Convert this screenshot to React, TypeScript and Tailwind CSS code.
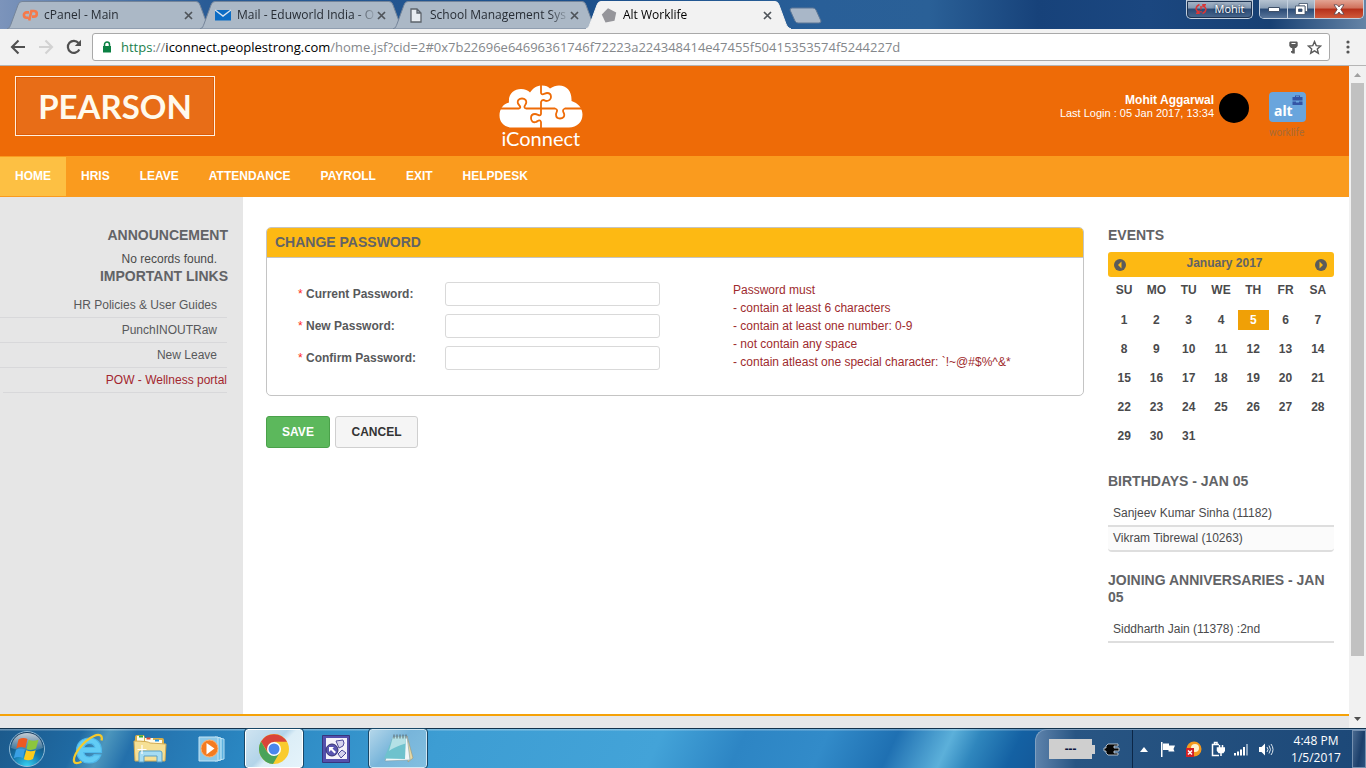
import React from "react";

const ARIAL = "font-['Liberation_Sans',Arial,sans-serif]";
const SEGOE = "font-['Open_Sans','Noto_Sans',sans-serif]";

function CloseMark() {
  return (
    <svg className="block size-[9px]" viewBox="0 0 9 9" aria-hidden="true">
      <path d="M1 1l7 7M8 1l-7 7" stroke="#4f545a" strokeWidth="1.7" />
    </svg>
  );
}

function Tab({ title, icon, active }: { title: string; icon: React.ReactNode; active?: boolean }) {
  return (
    <div className={active ? "relative z-10 -mr-[12px] h-[28px] w-[205px] min-w-0" : "relative -mr-[12px] h-[28px] w-[205px] min-w-0"}>
      <svg className="absolute inset-0 size-full" viewBox="0 0 205 28" preserveAspectRatio="none" aria-hidden="true">
        <path
          d="M0 28C3 27 3 25 4 23L11 4Q12 .5 15 .5H189Q192 .5 193 4L200 23C201 25 202 27 205 28Z"
          fill={active ? "#f2f2f2" : "#abb8c6"}
          stroke={active ? "#f2f2f2" : "#75859a"}
        />
      </svg>
      <div className="relative flex h-full items-center pr-[19px] pl-[15px]">
        <span className="flex w-4 shrink-0 justify-center">{icon}</span>
        <span
          className={
            (active ? "text-black" : "text-[#272d35]") +
            " ml-[6px] min-w-0 flex-1 overflow-hidden text-[12px] leading-4 whitespace-nowrap [mask-image:linear-gradient(to_right,black_85%,transparent)]"
          }
        >
          {title}
        </span>
        <button aria-label={"Close " + title} className="shrink-0">
          <CloseMark />
        </button>
      </div>
    </div>
  );
}

function TabStrip() {
  return (
    <div className="flex h-[29px] shrink-0 items-start justify-between bg-[linear-gradient(90deg,#7c94bb_0%,#2a5c96_15%,#1b4f8b_42%,#295f98_60%,#2a6097_68%,#17427a_76%,#1b4780_84%,#174073_93%,#6584a6_100%)]">
      <div className="flex min-w-0 items-end pt-px pl-[7px]">
        <Tab
          title="cPanel - Main"
          icon={
            <svg className="h-[12px] w-[16px]" viewBox="0 0 16 12" fill="none" stroke="#f6794a" strokeWidth="2.6" aria-hidden="true">
              <path d="M7 3.4H4.6a2.7 2.7 0 0 0 0 5.4H6.4M7.2 11.5L9.4 2H12a2.5 2.5 0 0 1 0 5.6H10" />
            </svg>
          }
        />
        <Tab
          title="Mail - Eduworld India - O"
          icon={
            <svg className="h-[12px] w-[16px]" viewBox="0 0 16 12" aria-hidden="true">
              <path d="M0 1h16v10.500H0z" fill="#0b6cc4" />
              <path d="M0 1l8 6 8-6" fill="none" stroke="#d7e3ef" strokeWidth="1.4" />
            </svg>
          }
        />
        <Tab
          title="School Management Sys"
          icon={
            <svg className="h-[15px] w-[12px]" viewBox="0 0 12 15" fill="#e8edf2" stroke="#5c636b" strokeWidth="1.3" aria-hidden="true">
              <path d="M1 1h6l4 4v9H1zM7 1v4h4" />
            </svg>
          }
        />
        <Tab
          active
          title="Alt Worklife"
          icon={
            <svg className="h-[15px] w-[16px]" viewBox="0 0 16 15" aria-hidden="true">
              <path d="M7 .3L15.200 4.500 13.500 12.800 4.500 14.500.8 6.500z" fill="#95959a" />
            </svg>
          }
        />
        <button aria-label="New tab" className="relative z-10 ml-[10px] self-center">
          <svg className="block h-[17px] w-[34px]" viewBox="0 0 34 17" aria-hidden="true">
            <path d="M3 1h21q2 0 3 2l5 11q0 2-2 2H9q-2 0-3-2L1 3q0-2 2-2z" fill="#a9b7c8" stroke="#5d7797" />
          </svg>
        </button>
      </div>
      <div className="flex shrink-0 gap-[6px] pr-[2px]">
        <button className="flex h-[19px] w-[67px] items-center justify-center gap-2 rounded-b-[5px] border border-t-0 border-[#c3d0df] bg-[linear-gradient(#aebccc_0%,#8499b2_45%,#2a4a75_50%,#4a688e_100%)] text-[11px] leading-4 text-white outline-1 -outline-offset-2 outline-[#1d3352] [text-shadow:0_0_3px_#0a1a30]">
          <svg className="size-[12px]" viewBox="0 0 12 12" fill="none" stroke="#d93636" strokeWidth="1.500" aria-hidden="true">
            <path d="M4.500 1.500Q.8 3 1.200 6.500L3.500 10M1 10.300h3V7.500M7.500 10.500Q11.200 9 10.800 5.500L8.500 2M11 1.700H8v2.800M6 3v3.500M6 8v1.500" />
          </svg>
          Mohit
        </button>
        <div className="flex h-[19px] overflow-hidden rounded-b-[5px] border border-t-0 border-[#c3d0df]">
          <button aria-label="Minimize" className="flex w-[28px] items-center justify-center border-r border-[#c3d0df] bg-[linear-gradient(#b6c3d1_0%,#8ca0b6_45%,#2a4a75_50%,#58759a_100%)]">
            <svg className="h-[5px] w-[12px]" viewBox="0 0 12 5" aria-hidden="true">
              <path d="M.5.500h11v4H.5z" fill="#fff" stroke="#3f5068" />
            </svg>
          </button>
          <button aria-label="Restore" className="flex w-[27px] items-center justify-center border-r border-[#c3d0df] bg-[linear-gradient(#b6c3d1_0%,#8ca0b6_45%,#2a4a75_50%,#58759a_100%)]">
            <svg className="h-[12px] w-[13px]" viewBox="0 0 13 12" fillRule="evenodd" fill="#fff" stroke="#3f5068" strokeWidth=".8" aria-hidden="true">
              <path d="M4 .5h8.500v8H10V3H4z" />
              <path d="M.5 3H10v8.500H.5zM3.500 6h3.500v2.500H3.500z" />
            </svg>
          </button>
          <button aria-label="Close window" className="flex w-[48px] items-center justify-center bg-[linear-gradient(#e3a493_0%,#d0705b_45%,#b5301a_50%,#d0593a_100%)]">
            <svg className="h-[11px] w-[12px]" viewBox="0 0 12 11" aria-hidden="true">
              <path d="M1 .8h3.200L6 3l1.800-2.200H11L7.800 5.500 11 10.200H7.800L6 8l-1.800 2.200H1l3.200-4.700z" fill="#fff" stroke="#57444d" strokeWidth=".8" />
            </svg>
          </button>
        </div>
      </div>
    </div>
  );
}

function Toolbar() {
  return (
    <div className="flex h-[37px] shrink-0 items-center border-b border-[#b5b5b5] bg-[#f2f2f2] pr-[16px] pl-[10px]">
      <div className="flex items-center gap-[12px]">
        <button aria-label="Back">
          <svg className="block size-4" viewBox="0 0 16 16" fill="none" stroke="#505050" strokeWidth="2.100" aria-hidden="true">
            <path d="M15 8H2M8.500 1.500L2 8l6.500 6.500" />
          </svg>
        </button>
        <button aria-label="Forward">
          <svg className="block size-4" viewBox="0 0 16 16" fill="none" stroke="#d2d2d2" strokeWidth="2.100" aria-hidden="true">
            <path d="M1 8h13M7.500 1.500L14 8l-6.500 6.500" />
          </svg>
        </button>
        <button aria-label="Reload">
          <svg className="block size-4" viewBox="0 0 16 16" aria-hidden="true">
            <path d="M13.300 10.500A6 6 0 1 1 12.500 4" fill="none" stroke="#505050" strokeWidth="2.200" />
            <path d="M15 .8v6.200H8.800z" fill="#505050" />
          </svg>
        </button>
      </div>
      <div className="ml-[10px] flex h-[28px] min-w-0 flex-1 items-center rounded-[3px] border border-[#a9a9a9] bg-white pr-[7px] pl-[9px]">
        <svg className="mr-[9px] h-[12px] w-[10px] shrink-0" viewBox="0 0 10 12" aria-hidden="true">
          <path d="M2.500 6V3.500a2.500 2.500 0 0 1 5 0V6" fill="none" stroke="#0b8043" strokeWidth="1.500" />
          <path d="M1 5h8v6.500H1z" fill="#0b8043" />
        </svg>
        <span className="min-w-0 flex-1 overflow-hidden text-[13px] leading-5 whitespace-nowrap text-[#84878b]">
          <span className="text-[#1b7f4d]">https</span>://<span className="text-black">iconnect.peoplestrong.com</span>
          /home.jsf?cid=2#0x7b22696e64696361746f72223a224348414e47455f50415353574f5244227d
        </span>
        <button aria-label="Saved passwords">
          <svg className="block h-[13px] w-[9px]" viewBox="0 0 9 13" fillRule="evenodd" fill="#5a5a5a" aria-hidden="true">
            <path d="M1 .5h7l.7 1V5L7 7H5.800v5.500H3.200V7H2L.3 5V1.500zM2.500 2v1h4V2z" />
            <path d="M2 10h2v1.800H2z" />
          </svg>
        </button>
        <button aria-label="Bookmark this page" className="ml-[9px]">
          <svg className="block size-[15px]" viewBox="0 0 15 15" fill="none" stroke="#5a5a5a" strokeWidth="1.400" aria-hidden="true">
            <path d="M7.500 1.600l1.700 4 4.400.4-3.300 2.900 1 4.300-3.800-2.300-3.800 2.300 1-4.300L1.400 6l4.400-.4z" />
          </svg>
        </button>
      </div>
      <button aria-label="Menu" className="ml-[16px]">
        <svg className="block h-[14px] w-[4px]" viewBox="0 0 4 14" fill="#555" aria-hidden="true">
          <circle cx="2" cy="2" r="1.600" />
          <circle cx="2" cy="7" r="1.600" />
          <circle cx="2" cy="12" r="1.600" />
        </svg>
      </button>
    </div>
  );
}

function Banner() {
  return (
    <header className="grid h-[90px] shrink-0 grid-cols-[35%_auto_1fr] items-start bg-[#ee6b07] pr-[43px] pl-[15px]">
      <div className="mt-[10px] flex h-[60px] w-[200px] items-center justify-center border border-[#fff0de] bg-[#e86d17] font-['Lato',sans-serif] text-[33px] leading-none font-bold text-[#fffaec] ring-1 ring-[#dd5c08] ring-inset">
        PEARSON
      </div>
      <div className="mt-[19px] flex w-[140px] flex-col items-center pl-[8px]">
        <svg className="h-[43px] w-[84px]" viewBox="0 0 84 43" aria-hidden="true">
          <path d="M13 42.500C5 42.500.5 37 .5 30.500.500 24 4 19 10 17.500 9 9 15 4 22 4c4 0 7 1.500 9 3.500C34 3 38 .5 43 .5c4 0 6 1 8 3C54 1.500 57 .5 60 .5c8 0 13 6 12.500 15.500C79 18 83.500 23 83.500 29.500 83.500 37 78 42.500 70 42.500z" fill="#fff" />
          <path
            d="M0 23.500H20c3-1 0-3-1-5-1-3 1-5 4-5s5 2 4 5c-1 2-3 4 0 5H56c4 1 1 4 1 6 0 3 2 4 4 4 3 0 5-2 4-5-1-2-2-4 1-5H84M42 0V8c1 3 4 0 6 0 3 0 4 2 4 4s-2 4-5 4c-2-1-4-2-5 1V29c-1 3-3 0-6 0-3 0-4 2-4 4 0 3 2 5 5 4 2-1 4-3 5 0v6"
            fill="none"
            stroke="#ee6b07"
            strokeWidth="1.800"
          />
        </svg>
        <div className="font-['Lato',sans-serif] text-[20px] leading-5 text-white">iConnect</div>
      </div>
      <div className="flex items-start justify-end">
        <div className="mt-[27px] text-right text-white">
          <div className="text-[12px] leading-[14px] font-bold">Mohit Aggarwal</div>
          <div className="text-[11px] leading-3">Last Login : 05 Jan 2017, 13:34</div>
        </div>
        <div className="mt-[27px] ml-[5px] size-[30px] rounded-full bg-black" />
        <svg className="mt-[26px] ml-[20px] h-[47px] w-[37px]" viewBox="0 0 37 47" aria-label="alt worklife" role="img">
          <rect width="37" height="30" rx="4" fill="#69a5dd" />
          <path d="M23.500 5h2.500V3.500h5V5h2.500v3.500h-10zM27 5h3v-.7h-3zM23.500 9.500h3.500v1h3v-1h3.500V13h-10z" fill="#3455a6" />
          <text x="5" y="24" fontFamily="Noto Sans, sans-serif" fontSize="14" fontWeight="700" fill="#fff">alt</text>
          <text x="0" y="44" fontFamily="Roboto, sans-serif" fontSize="10" fill="#a96a35">worklife</text>
        </svg>
      </div>
    </header>
  );
}

const NAV = ["HOME", "HRIS", "LEAVE", "ATTENDANCE", "PAYROLL", "EXIT", "HELPDESK"];

function Nav() {
  return (
    <nav className="flex h-[41px] shrink-0 bg-[#fa9b1e] py-px text-[12px] font-bold text-white">
      {NAV.map((item, i) => (
        <a key={item} href="#" className={i === 0 ? "flex items-center bg-[#fdc043] px-[15px] pb-[2px]" : "flex items-center px-[15px] pb-[2px]"}>
          {item}
        </a>
      ))}
    </nav>
  );
}

const HEADING = "text-[14px] leading-[17px] font-bold text-[#626366]";

function Sidebar() {
  return (
    <aside className="w-[243px] shrink-0 bg-[#e6e6e6] pt-[30px] pr-[15px] text-right text-[12px] text-[#58595b]">
      <h2 className={HEADING}>ANNOUNCEMENT</h2>
      <p className="pt-[7px] pr-[11px] leading-[17px] text-[#4a4a4a]">No records found.</p>
      <h2 className={HEADING}>IMPORTANT LINKS</h2>
      <ul className="mt-[8px] mr-px">
        {["HR Policies & User Guides", "PunchINOUTRaw", "New Leave"].map((t) => (
          <li key={t} className="h-[25px] border-b border-[#d8d8da] pr-[10px] leading-6">
            <a href="#">{t}</a>
          </li>
        ))}
        <li className="ml-[3px] h-[25px] border-b border-[#d8d8da] leading-6 text-[#a3262f]">
          <a href="#">POW - Wellness portal</a>
        </li>
      </ul>
    </aside>
  );
}

function PasswordPanel() {
  const fields = [
    ["current", "Current Password:"],
    ["new", "New Password:"],
    ["confirm", "Confirm Password:"],
  ];
  return (
    <main className="min-w-0 flex-1 pt-[30px] pr-[24px] pl-[23px]">
      <form>
        <section className="overflow-hidden rounded-[5px] border border-[#c4c4c4] bg-white">
          <h2 className="h-[30px] border-b border-[#c4c4c4] bg-[#fdb913] px-2 text-[14px] leading-[29px] font-bold text-[#626366]">CHANGE PASSWORD</h2>
          <div className="flex pt-[24px] pb-[24px] pl-[31px]">
            <div className="flex shrink-0 flex-col gap-2">
              {fields.map(([id, label]) => (
                <div key={id} className="flex items-center">
                  <label htmlFor={id} className="w-[147px] text-[12px] font-bold text-[#58595b]">
                    <span className="font-normal text-[#ff2a1a]">*</span> {label}
                  </label>
                  <input id={id} type="password" className="h-[24px] w-[215px] rounded-[3px] border border-[#d9d9d9] bg-white px-2 text-[12px] outline-none" />
                </div>
              ))}
            </div>
            <p className="-mt-px ml-[73px] text-[12px] leading-[18px] text-[#9e2b2e]">
              Password must
              <br />- contain at least 6 characters
              <br />- contain at least one number: 0-9
              <br />- not contain any space
              <br />- contain atleast one special character: `!~@#$%^&amp;*
            </p>
          </div>
        </section>
        <div className="mt-[20px] flex gap-[5px] text-[12px]">
          <button type="button" className="h-[32px] w-[64px] rounded-[3px] border border-[#4aa14a] bg-[#5cb85c] font-bold text-white">SAVE</button>
          <button type="button" className="h-[32px] w-[83px] rounded-[3px] border border-[#cfcfcf] bg-[#f5f5f5] font-bold text-[#333]">CANCEL</button>
        </div>
      </form>
    </main>
  );
}

const WEEKS = [0, 1, 2, 3, 4].map((w) => [1, 2, 3, 4, 5, 6, 7].map((d) => w * 7 + d));

function Arrow({ flip }: { flip?: boolean }) {
  return (
    <svg className="block size-3" viewBox="0 0 12 12" aria-hidden="true">
      <circle cx="6" cy="6" r="6" fill="#5b5b5b" />
      <path d={flip ? "M4.500 2.500l3.500 3.500-3.500 3.500z" : "M7.500 2.500L4 6l3.500 3.500z"} fill="#fdb913" />
    </svg>
  );
}

function PeopleRow({ children, alt }: { children: React.ReactNode; alt?: boolean }) {
  return (
    <li className={alt ? "h-[25px] rounded-b-[4px] border-b-2 border-[#dedede] bg-[#fbfbfb] pl-[5px] leading-[23px]" : "h-[25px] border-b-2 border-[#dedede] pl-[5px] leading-[23px]"}>
      {children}
    </li>
  );
}

function RightColumn() {
  return (
    <aside className="mr-[15px] w-[226px] shrink-0 pt-[30px] text-[12px] text-[#4a4a4c]">
      <h2 className={HEADING}>EVENTS</h2>
      <div className="mt-[8px] flex h-[25px] items-center justify-between rounded-[3px] bg-[#fdb913] pr-[7px] pl-[6px] font-bold text-[#626366]">
        <button aria-label="Previous month">
          <Arrow />
        </button>
        <span className="pb-1 pl-2">January 2017</span>
        <button aria-label="Next month">
          <Arrow flip />
        </button>
      </div>
      <table className="w-full table-fixed border-collapse text-center font-bold">
        <thead>
          <tr className="h-[28px]">
            {["SU", "MO", "TU", "WE", "TH", "FR", "SA"].map((d) => (
              <th key={d} className="p-0 pb-0.5">{d}</th>
            ))}
          </tr>
        </thead>
        <tbody>
          {WEEKS.map((week) => (
            <tr key={week[0]} className="h-[29px]">
              {week.map((d) => (
                <td key={d} className="p-0">
                  {d <= 31 && <span className={d === 5 ? "mx-auto block h-5 w-[31px] bg-[#f0a006] leading-5 text-white" : "mx-auto block h-5 leading-5"}>{d}</span>}
                </td>
              ))}
            </tr>
          ))}
        </tbody>
      </table>
      <h2 className={"mt-[23px] " + HEADING}>BIRTHDAYS - JAN 05</h2>
      <ul className="mt-[12px]">
        <PeopleRow>Sanjeev Kumar Sinha (11182)</PeopleRow>
        <PeopleRow alt>Vikram Tibrewal (10263)</PeopleRow>
      </ul>
      <h2 className={"mt-[20px] " + HEADING}>JOINING ANNIVERSARIES - JAN 05</h2>
      <ul className="mt-[12px]">
        <PeopleRow>Siddharth Jain (11378) :2nd</PeopleRow>
      </ul>
    </aside>
  );
}

function ScrollBar() {
  return (
    <div className="flex w-[17px] shrink-0 flex-col items-center bg-[#f1f1f1]">
      <svg className="h-[17px] w-[17px] shrink-0" viewBox="0 0 17 17" aria-hidden="true">
        <path d="M5 11h7L8.500 7z" fill="#a0a0a0" />
      </svg>
      <div className="w-[13px] grow-[573] basis-0 bg-[#c1c1c1]" />
      <div className="grow-[55] basis-0" />
      <svg className="h-[17px] w-[17px] shrink-0" viewBox="0 0 17 17" aria-hidden="true">
        <path d="M5 6h7l-3.500 4z" fill="#505050" />
      </svg>
    </div>
  );
}

function StartOrb() {
  return (
    <svg className="size-[38px]" viewBox="0 0 38 38" aria-hidden="true">
      <defs>
        <radialGradient id="orb" cx=".5" cy="1" r=".95">
          <stop offset="0" stopColor="#35d4f3" />
          <stop offset=".45" stopColor="#1678ae" />
          <stop offset="1" stopColor="#153b60" />
        </radialGradient>
        <linearGradient id="orbShine" x2="0" y2="1">
          <stop offset="0" stopColor="#fff" stopOpacity=".75" />
          <stop offset="1" stopColor="#fff" stopOpacity=".1" />
        </linearGradient>
      </defs>
      <circle cx="19" cy="19" r="17.500" fill="url(#orb)" stroke="#92bcd8" />
      <path d="M3 18C4 8 11 3 19 3s15 5 16 15c-9 4-22 4-32 0z" fill="url(#orbShine)" />
      <path d="M10.500 9.500q4.500-2.500 9-.5L17.300 18q-4.500-2-9 .5z" fill="#ee5a22" />
      <path d="M20.700 9.800q4.500 2 9.800 0L28 18.500q-5 2.500-9.500.5z" fill="#8cc63e" />
      <path d="M8 19.800q4.500-2.500 9-.3L14.800 28q-4.500-2-9 .3z" fill="#3aa0e4" />
      <path d="M18.200 20.200q4.500 2.200 9.500 0L25 29q-4.500 2.500-9.200.3z" fill="#fecb1c" />
    </svg>
  );
}

function IeIcon() {
  return (
    <svg className="h-[32px] w-[32px]" viewBox="0 0 32 32" aria-hidden="true">
      <path
        d="M29.500 19.500H11.800c.5 3 3 4.500 5.700 4.500 2.200 0 3.800-.8 4.800-2.300l6.500.3C27 27 22.500 30 17 30 10 30 4.500 25 4.500 17.500S10 5 17.500 5s12.500 5.500 12 14.500zM12 14.500h10.800c-.4-2.600-2.600-4.200-5.300-4.200s-4.900 1.600-5.500 4.200z"
        fill="#62ccf5"
        stroke="#4fb9ec"
        strokeWidth="1.200"
      />
      <path d="M29.500 7.500C31 2 27 .5 22 3 11 8 1 22 2 28c.5 3 4 2.500 7.500.8" fill="none" stroke="#f5ca2c" strokeWidth="2.300" />
    </svg>
  );
}

function ExplorerIcon() {
  return (
    <svg className="h-[31px] w-[34px]" viewBox="0 0 34 31" aria-hidden="true">
      <path d="M2 4q0-2 2-2h7l1 3h17q2 0 2 2v20H2z" fill="#d8ae4a" />
      <path d="M4 3h7v5H4zM12 5h8v5h-8zM20 7h9v5h-9z" fill="#fffbe8" />
      <path d="M6 2.500h4v2H6z" fill="#30ad3c" />
      <path d="M13.500 4.500h4v2h-4z" fill="#e34c35" />
      <path d="M22 6.500h4v2h-4z" fill="#2696e4" />
      <path d="M1 8q14 0 16 2l16 1-1 17H2z" fill="#f6e095" stroke="#d3ac54" />
      <path d="M6 29V20q0-2 2-2h19q2 0 2 2v9h-5v-6H11v6z" fill="#a6dcf2" stroke="#5a9fc4" />
      <path d="M9 12v9M4.500 16.500h9" stroke="#fff" strokeWidth="1.200" />
    </svg>
  );
}

function MediaIcon() {
  return (
    <svg className="h-[27px] w-[29px]" viewBox="0 0 29 27" aria-hidden="true">
      <path d="M21 3l5 1v20l-5 1z" fill="#5fb2df" stroke="#b7e0f4" />
      <path d="M17 2l6 1v22l-6 1z" fill="#73c1e8" stroke="#d0edf9" />
      <path d="M1 2h19v24H1z" fill="#8bc8e8" stroke="#c4e4f4" />
      <circle cx="11.500" cy="13.500" r="8.500" fill="#f47b20" stroke="#fbb475" />
      <path d="M8.500 8l8 5.500-8 6z" fill="#fff" />
    </svg>
  );
}

function ChromeIcon() {
  return (
    <svg className="size-[30px]" viewBox="0 0 30 30" aria-hidden="true">
      <circle cx="15" cy="15" r="15" fill="#f9cb2d" />
      <path d="M15 15L8.900 18.500 2 7.500A15 15 0 0 1 28 7.800H15z" fill="#d9453a" />
      <path d="M2 7.500A15 15 0 0 0 14 30l6.500-11.200L15 15 8.500 18.500z" fill="#4aa35a" />
      <circle cx="15" cy="15" r="7" fill="#fff" />
      <circle cx="15" cy="15" r="5.500" fill="#4a87ed" />
    </svg>
  );
}

function ToolIcon() {
  return (
    <svg className="size-[28px]" viewBox="0 0 28 28" aria-hidden="true">
      <path d="M.5.500h27v27H.5z" fill="#5450ac" stroke="#38357d" />
      <path d="M4 3h21v21H4z" fill="#f4f2fa" />
      <path d="M14 6l7-1q2 3 0 6l-4 2zM16 19l4-4 4 3-5 5z" fill="#d5d3ed" stroke="#4b4899" />
      <circle cx="10" cy="15" r="6" fill="#5854b0" stroke="#34316f" />
      <path d="M7 12h5l-1.500 1.500L14 17l-1.500 1.500L9 15l-2 2z" fill="#fff" />
    </svg>
  );
}

function NotepadIcon() {
  return (
    <svg className="h-[31px] w-[32px]" viewBox="0 0 32 31" aria-hidden="true">
      <path d="M25 3l6 22-5 4z" fill="#e5d9a5" stroke="#9c9474" strokeWidth=".6" />
      <path d="M11 4l14-1 3 24-25 1z" fill="#f1f7f8" stroke="#7f9ea6" strokeWidth=".6" />
      <path d="M11 4l13-.5-1 22.500L2 25.500z" fill="#6ec2cd" />
      <path d="M11 4l13-.5-.4 7Q14 13 7 18z" fill="#b4e1e6" />
      <path d="M12 1.500v4M15 1.500v4M18 1.500v4M21 1.500v4M24 1.500v4" stroke="#59676c" />
    </svg>
  );
}

const APPS = [
  { name: "Internet Explorer", icon: <IeIcon /> },
  { name: "Windows Explorer", icon: <ExplorerIcon /> },
  { name: "Media Player", icon: <MediaIcon /> },
  { name: "Chrome", icon: <ChromeIcon />, tone: "bright" },
  { name: "Snipping tool", icon: <ToolIcon /> },
  { name: "Notepad", icon: <NotepadIcon />, tone: "soft" },
];

function Taskbar() {
  return (
    <footer className="flex h-[40px] shrink-0 items-stretch border-t border-[#12324d] bg-[linear-gradient(#ffffff50_0,#ffffff50_1px,transparent_2px),linear-gradient(115deg,#1c5a8c_0%,#1f6aa3_6%,#4c96bd_8%,#2470ab_10%,#2a86c1_18%,#3d9dd3_32%,#43a3d8_48%,#2d85c4_54%,#328bc9_60%,#1f70b2_65%,#5cb0da_69%,#2f86bd_71%,#1461a3_74%,#145393_78%,#1a447b_84%,#1d4a7c_100%)]">
      <button aria-label="Start" className="flex w-[57px] items-center justify-center pr-[3px]">
        <StartOrb />
      </button>
      {APPS.map((a) => (
        <button
          key={a.name}
          aria-label={a.name}
          className={
            a.tone === "bright"
              ? "mx-[2px] flex w-[58px] items-center justify-center rounded-[3px] border border-white bg-[linear-gradient(135deg,#cfe4f1_0%,#b3d4e9_45%,#dceef7_55%,#e5f3fa_100%)] outline-1 outline-[#194767]"
              : a.tone === "soft"
                ? "mx-[2px] flex w-[58px] items-center justify-center rounded-[3px] border border-[#d2e8f4] bg-[linear-gradient(135deg,#b3d6ea_0%,#78b5da_45%,#82bfe0_100%)] outline-1 outline-[#194767]"
                : "flex w-[62px] items-center justify-center"
          }
        >
          {a.icon}
        </button>
      ))}
      <div className="ml-auto flex h-full items-center rounded-tl-[12px] border-t border-l border-[#7f9fc0] bg-[linear-gradient(90deg,#5d82ab_0%,#285583_12%,#1c4878_100%)] text-white">
        <div className="flex h-full w-[97px] items-center justify-between border-r border-[#0c2747] pr-[12px] pl-[13px]">
          <div className="flex items-center">
            <span className="flex h-[20px] w-[43px] items-center justify-center bg-[#cfcfcf] text-[12px] leading-4 font-bold text-[#0b1440]">---</span>
            <span className="h-[9px] w-[3px] bg-[#cfcfcf]" />
          </div>
          <svg className="h-[13px] w-[17px]" viewBox="0 0 17 13" fill="#050505" stroke="#d6dde5" strokeWidth=".8" aria-hidden="true">
            <path d="M5 1h10v2h-4v2h5v3h-5v2h4v2H5L3 10V8H1V5h2V3z" />
          </svg>
        </div>
        <div className="flex items-center gap-[9px] pl-[7px]">
          <svg className="h-[5px] w-[8px]" viewBox="0 0 8 5" fill="#fff" aria-hidden="true">
            <path d="M0 5h8L4 0z" />
          </svg>
          <svg className="ml-[3px] h-[15px] w-[16px]" viewBox="0 0 16 15" aria-hidden="true">
            <path d="M1 0h1.500v15H1zM3 1.500h6v2h6L13.500 7l1 2.500H8.500V8H3z" fill="#fff" />
          </svg>
          <svg className="size-[17px]" viewBox="0 0 17 17" aria-hidden="true">
            <circle cx="9" cy="8" r="7.500" fill="#f59a1e" />
            <circle cx="10" cy="7" r="4" fill="#fff3d0" />
            <path d="M1 7h8v9H1z" fill="#d31f24" />
            <path d="M3 9.500l4 4M7 9.500l-4 4" stroke="#fff" strokeWidth="1.500" />
          </svg>
          <svg className="h-[16px] w-[14px]" viewBox="0 0 14 16" fill="none" stroke="#fff" strokeWidth="1.500" aria-hidden="true">
            <path d="M8 14.500H1.500V3.500H8M3.500 3V1.500H6V3" />
            <path d="M6.500 7h7v2.500L12 11.500H8L6.500 9.500zM8.500 4v3M11.500 4v3M10 11.500V15" fill="#fff" />
          </svg>
          <svg className="h-[13px] w-[15px]" viewBox="0 0 15 13" aria-hidden="true">
            <path d="M0 10h2v2.500H0zM3 8.500h2v4H3zM6 6.500h2v6H6zM9 4h2v8.500H9z" fill="#fff" />
            <path d="M12 1h2v11.500h-2z" fill="#8ba5c0" />
          </svg>
          <svg className="h-[15px] w-[16px]" viewBox="0 0 16 15" aria-hidden="true">
            <path d="M1 5h2.500L7 1.500v12L3.500 10H1z" fill="#fff" />
            <path d="M9 5q2 2.500 0 5M11 3.500q3 4 0 8M13 2q4 5.500 0 11" fill="none" stroke="#dde7f0" />
          </svg>
        </div>
        <div className="w-[78px] pl-[6px] text-center text-[12px] leading-[17px]">
          4:48 PM
          <br />
          1/5/2017
        </div>
        <button aria-label="Show desktop" className="h-full w-[14px] border border-[#7590b0] bg-[linear-gradient(100deg,#49698f_0%,#1c3f6b_60%,#2b5480_100%)]" />
      </div>
    </footer>
  );
}

export default function App() {
  return (
    <div className={"flex h-screen flex-col overflow-hidden " + SEGOE}>
      <TabStrip />
      <Toolbar />
      <div className={"flex min-h-0 flex-1 " + ARIAL}>
        <div className="flex min-w-0 flex-1 flex-col bg-white">
          <Banner />
          <Nav />
          <div className="flex min-h-0 flex-1">
            <Sidebar />
            <PasswordPanel />
            <RightColumn />
          </div>
          <div className="h-[14px] shrink-0 border-t-2 border-[#f5a209] bg-[#e6e7e9]" />
        </div>
        <ScrollBar />
      </div>
      <Taskbar />
    </div>
  );
}
